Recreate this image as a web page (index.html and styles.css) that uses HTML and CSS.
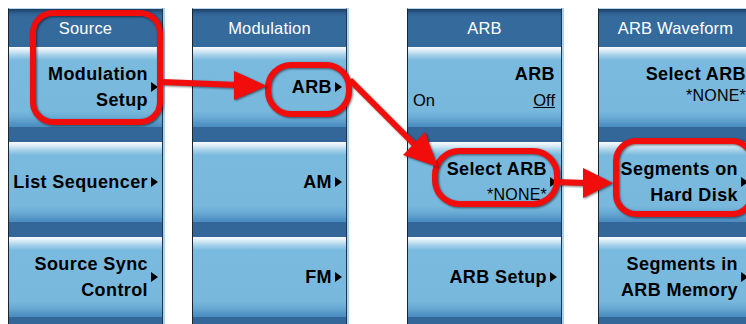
FILE: index.html
```html
<!DOCTYPE html>
<html>
<head>
<meta charset="utf-8">
<link rel="stylesheet" href="styles.css">
</head>
<body>
<div class="stage">
  <div class="panel p1">
    <div class="hdr">Source</div>
    <div class="btn"><div class="lbl"><span>Modulation</span><span>Setup</span></div><i class="tri"></i></div>
    <div class="btn"><div class="lbl"><span>List Sequencer</span></div><i class="tri"></i></div>
    <div class="btn"><div class="lbl"><span>Source Sync</span><span>Control</span></div><i class="tri"></i></div>
  </div>
  <div class="panel p2">
    <div class="hdr">Modulation</div>
    <div class="btn"><div class="lbl"><span>ARB</span></div><i class="tri"></i></div>
    <div class="btn"><div class="lbl"><span>AM</span></div><i class="tri"></i></div>
    <div class="btn"><div class="lbl"><span>FM</span></div><i class="tri"></i></div>
  </div>
  <div class="panel p3">
    <div class="hdr">ARB</div>
    <div class="btn toggle">
      <div class="lbl"><span>ARB</span></div>
      <div class="onoff"><span>On</span><span class="sel">Off</span></div>
    </div>
    <div class="btn"><div class="lbl"><span>Select ARB</span><span class="val">*NONE*</span></div><i class="tri"></i></div>
    <div class="btn"><div class="lbl"><span>ARB Setup</span></div><i class="tri"></i></div>
  </div>
  <div class="panel p4">
    <div class="hdr">ARB Waveform</div>
    <div class="btn plain"><div class="lbl tight"><span>Select ARB</span><span class="val">*NONE*</span></div></div>
    <div class="btn"><div class="lbl"><span>Segments on</span><span>Hard Disk</span></div><i class="tri"></i></div>
    <div class="btn"><div class="lbl"><span>Segments in</span><span>ARB Memory</span></div><i class="tri"></i></div>
  </div>
</div>
<svg class="marks" width="746" height="324" viewBox="0 0 746 324">
  <g class="ink" fill="none" stroke="#f20d0d" stroke-width="6">
    <rect x="33" y="13" width="127" height="109" rx="20"/>
    <rect x="268" y="65" width="81" height="49" rx="23"/>
    <rect x="435" y="151" width="122" height="53" rx="24"/>
    <rect x="616" y="141" width="136" height="73" rx="20"/>
    <line x1="162" y1="82" x2="238" y2="85"/>
    <line x1="350" y1="80" x2="416" y2="146"/>
    <line x1="557" y1="182" x2="586" y2="183"/>
  </g>
  <g class="ink" fill="#f20d0d">
    <polygon points="234,71 267,86 234,100"/>
    <polygon points="403,155 438,167 425,132"/>
    <polygon points="583,168 613,183 583,198"/>
  </g>
</svg>
</body>
</html>
```
FILE: styles.css
```css
html, body {
  margin: 0;
  padding: 0;
  background: #ffffff;
}
body {
  width: 746px;
  height: 324px;
  overflow: hidden;
  position: relative;
  font-family: "Liberation Sans", Arial, sans-serif;
}
.stage {
  display: flex;
  align-items: flex-start;
  padding-top: 8px;
}
.panel {
  flex: none;
  width: 153px;
  height: 330px;
  background: #336699;
  border-left: 1px solid #1a2530;
  border-right: 1px solid #20364e;
  border-top: 1px solid #b8d8ee;
  box-shadow: 2px 0 0 #acd2ee;
  display: flex;
  flex-direction: column;
}
.p1 { margin-left: 8px; }
.p2 { margin-left: 29px; }
.p3 { margin-left: 60px; }
.p4 { margin-left: 36px; }
.hdr {
  height: 38px;
  line-height: 38px;
  text-align: center;
  color: #ffffff;
  font-size: 16.5px;
  letter-spacing: 0.2px;
  background: linear-gradient(#1c3c5e 0, #2e5f90 4px, #356a9d 8px, #356a9d 100%);
}
.btn {
  height: 80px;
  margin-bottom: 15px;
  display: flex;
  align-items: center;
  justify-content: flex-end;
  padding-right: 4px;
  background: linear-gradient(#f8fbfd 0, #e2eff8 3px, #a8d2eb 8px, #7bbadf 13px, #78b8dd 64px, #68aad4 71px, #5293c5 77px, #4a8cbe 80px);
}
.lbl {
  display: flex;
  flex-direction: column;
  align-items: flex-end;
  font-weight: bold;
  font-size: 18px;
  line-height: 26px;
  letter-spacing: 0.4px;
  color: #000;
  white-space: nowrap;
}
.lbl .val {
  font-weight: normal;
  font-size: 16px;
  letter-spacing: 0.2px;
}
.lbl.tight {
  line-height: 22px;
  margin-top: -4px;
}
.tri {
  width: 0;
  height: 0;
  border-left: 7px solid #000;
  border-top: 5px solid transparent;
  border-bottom: 5px solid transparent;
  margin-left: 3px;
}
.toggle {
  flex-direction: column;
  align-items: stretch;
  justify-content: center;
  padding: 0 6px 0 5px;
}
.onoff {
  display: flex;
  justify-content: space-between;
  font-size: 16.5px;
  line-height: 26px;
  color: #000;
}
.onoff .sel {
  text-decoration: underline;
}
.plain {
  padding-right: 6px;
}
.marks {
  position: absolute;
  left: 0;
  top: 0;
  pointer-events: none;
}
.ink {
  filter: drop-shadow(1px 1px 1px rgba(0, 0, 0, 0.55));
}
```
